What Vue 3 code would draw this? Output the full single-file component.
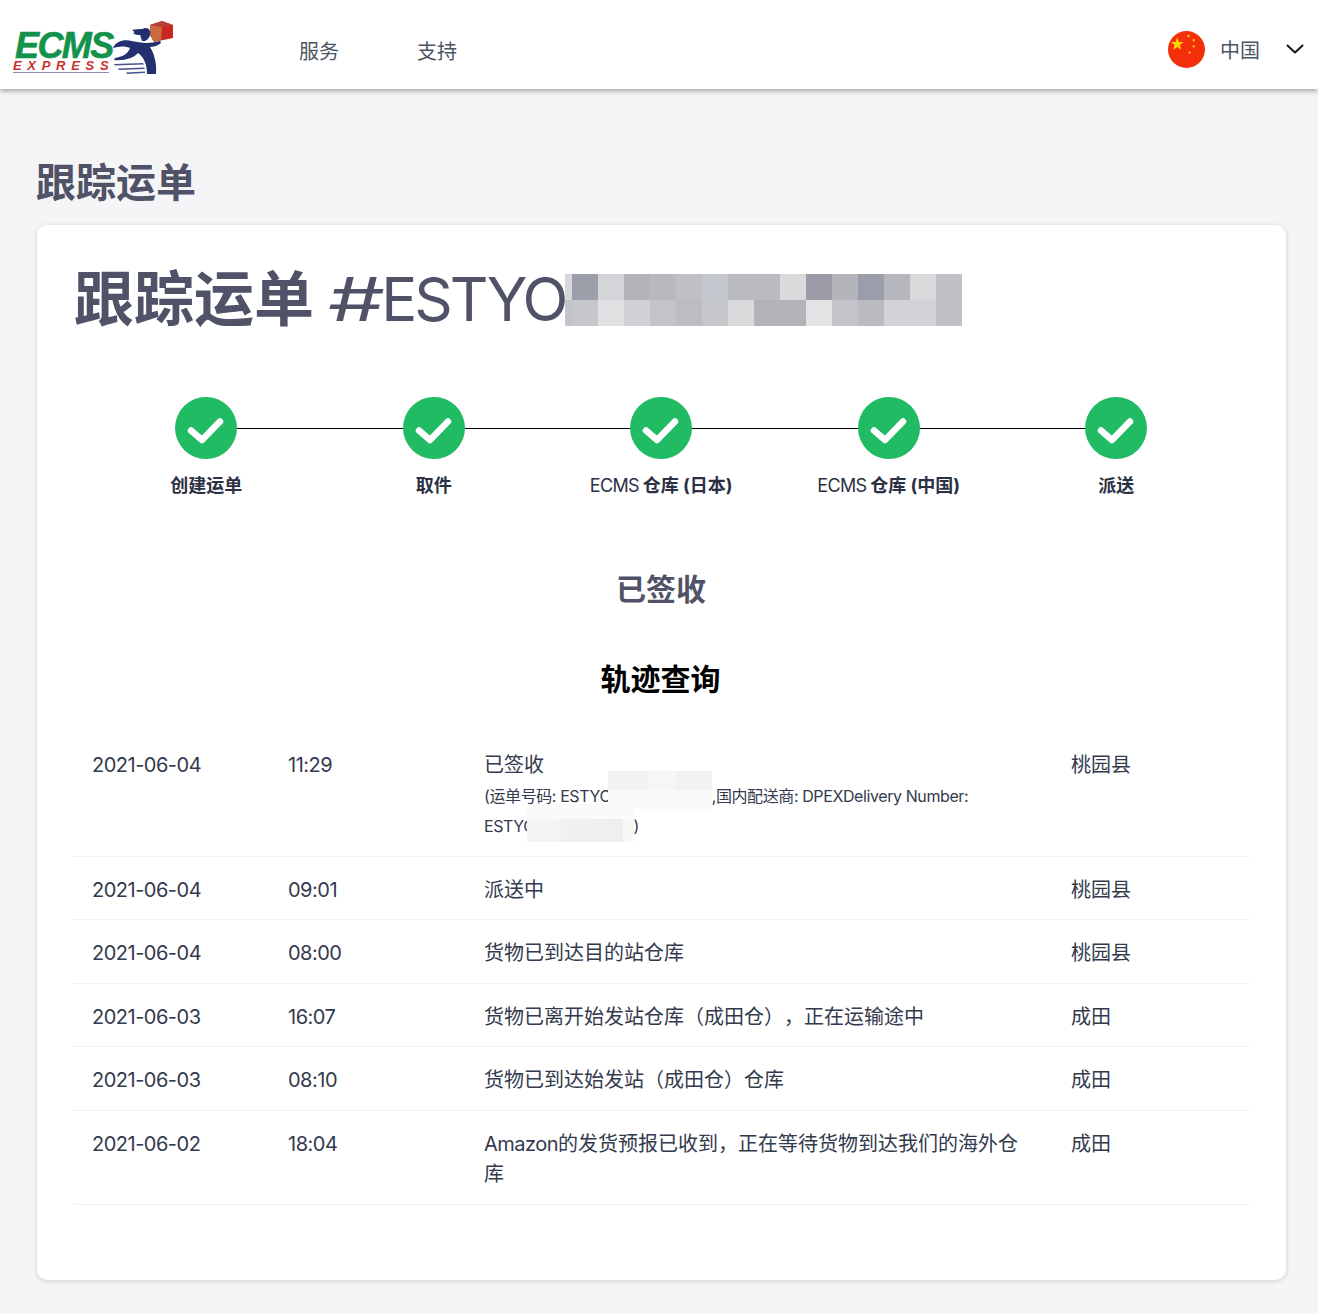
<template>
  <div class="page">
    <!-- 顶部导航 -->
    <header class="topbar">
      <div class="logo">
        <div class="logo-text">
          <span class="logo-ecms">ECMS</span>
          <span class="logo-express">EXPRESS</span>
        </div>
        <svg class="logo-runner" viewBox="112 18 64 60" width="64" height="60">
          <path d="M150 25 L162 21 L173 25 L173 38 L154 42 L150 35 Z" fill="#c8281f" />
          <path d="M150 25 L162 27 L161 40 L154 42 L150 35 Z" fill="#c96a3f" />
          <path d="M150 25 L162 21 L173 25 L162 27 Z" fill="#b8403a" />
          <path d="M140 32 C142 27 149 27 150 31 C151 35 149 39 145 41 L142 41 C141 38 140 35 140 32 Z" fill="#232f6e" />
          <path d="M141 35 C138 35 135 35 133 33 C135 33 135 32 132 30 C135 29 139 29 143 29 Z" fill="#232f6e" />
          <path d="M113 48 C116 41 124 39 132 41 C140 43 150 44 160 41 L161 43 C157 46 153 47 150 47 C154 53 157 63 156 74 L147 74 C147 65 144 57 138 53 C134 58 124 61 114 60 L115 58 C122 57 128 54 130 48 C125 46 119 46 113 48 Z" fill="#232f6e" />
          <path d="M114 64 L143 63 L144 64.5 L115 65.5 Z M118 68.5 L144 67.5 L145 69 L119 70 Z M126 72.5 L145 71.5 L145 73 L127 74 Z" fill="#4a5590" />
        </svg>
      </div>
      <nav class="nav">
        <a class="nav-item">服务</a>
        <a class="nav-item">支持</a>
      </nav>
      <div class="lang">
        <svg class="flag" viewBox="0 0 36 36" width="37" height="37">
          <circle cx="18" cy="18" r="18" fill="#f42f0c" />
          <polygon points="9,6 10.6,10.6 15.5,10.7 11.6,13.7 13,18.3 9,15.6 5,18.3 6.4,13.7 2.5,10.7 7.4,10.6" fill="#ffd500" />
          <circle cx="20" cy="5" r="1.1" fill="#ffd500" />
          <circle cx="25" cy="9" r="1.1" fill="#ffd500" />
          <circle cx="25" cy="15" r="1.1" fill="#ffd500" />
          <circle cx="21" cy="21" r="1.1" fill="#ffd500" />
        </svg>
        <span class="lang-name">中国</span>
        <svg class="chevron" viewBox="0 0 18 10" width="18" height="10">
          <path d="M1.5 1.5 L9 8.5 L16.5 1.5" fill="none" stroke="#111827" stroke-width="2" stroke-linecap="round" stroke-linejoin="round" />
        </svg>
      </div>
    </header>

    <main class="content">
      <h1 class="page-title">跟踪运单</h1>

      <section class="card">
        <div class="order-head">
          <h2 class="order-title">跟踪运单 <span class="order-hash">#</span><span class="order-no">ESTYO</span></h2>
          <div class="mosaic">
            <i v-for="(c, i) in mosaicCells" :key="i" :style="{ background: c }"></i>
          </div>
        </div>

        <!-- 进度 -->
        <ol class="steps">
          <li v-for="(step, i) in steps" :key="i" class="step">
            <span class="step-dot">
              <svg viewBox="0 0 62 62" width="62" height="62">
                <path d="M16 33.5 L27 43 L45 24.5" fill="none" stroke="#fff" stroke-width="6.5" stroke-linecap="round" stroke-linejoin="round" />
              </svg>
            </span>
            <span class="step-label"><span v-if="step.brand" class="step-brand">{{ step.brand }}</span>{{ step.name }}</span>
          </li>
        </ol>

        <p class="status">已签收</p>
        <h3 class="track-title">轨迹查询</h3>

        <div class="track-table">
          <div v-for="(row, i) in rows" :key="i" class="track-row">
            <div class="num">{{ row.date }}</div>
            <div class="num">{{ row.time }}</div>
            <div class="track-text">
              <span v-if="row.lead" class="num">{{ row.lead }}</span>{{ row.text }}
              <div v-if="row.first" class="track-note">
                (运单号码: ESTYC<span class="blur blur-a"></span>,国内配送商: DPEXDelivery Number: ESTYC<span class="blur blur-b"></span>)
              </div>
            </div>
            <div>{{ row.place }}</div>
          </div>
        </div>
      </section>
    </main>
  </div>
</template>

<script setup>
const top = ["#d6d7da", "#9c9ea9", "#d4d5d8", "#b3b4b9", "#b8b9be", "#bfc0c5", "#c3c6cc", "#bbbcc1", "#bbbcc1", "#dadbdd", "#9a9ba7", "#b4b5ba", "#9c9dab", "#b6b7bc", "#d8d9db", "#c0c1c6"];
const bottom = ["#c3c4c9", "#c6c7ca", "#dfe0e2", "#d0d1d4", "#c3c4ca", "#bcbdc2", "#c6c7cb", "#d8d9db", "#b2b3b7", "#b2b3b7", "#e2e3e5", "#c3c4ca", "#babbc0", "#d2d3d7", "#d2d3d7", "#bfc0c4"];
const mosaicCells = [...top, ...bottom];

const steps = [
  { name: "创建运单" },
  { name: "取件" },
  { brand: "ECMS", name: "仓库 (日本)" },
  { brand: "ECMS", name: "仓库 (中国)" },
  { name: "派送" },
];

const rows = [
  { date: "2021-06-04", time: "11:29", text: "已签收", place: "桃园县", first: true },
  { date: "2021-06-04", time: "09:01", text: "派送中", place: "桃园县" },
  { date: "2021-06-04", time: "08:00", text: "货物已到达目的站仓库", place: "桃园县" },
  { date: "2021-06-03", time: "16:07", text: "货物已离开始发站仓库（成田仓），正在运输途中", place: "成田" },
  { date: "2021-06-03", time: "08:10", text: "货物已到达始发站（成田仓）仓库", place: "成田" },
  { date: "2021-06-02", time: "18:04", lead: "Amazon", text: "的发货预报已收到，正在等待货物到达我们的海外仓库", place: "成田" },
];
</script>

<style>
body {
  background: #f5f5f7;
}
</style>

<style scoped>
.page {
  min-height: 1314px;
  background: #f5f5f7;
  font-family: Inter, "Noto Sans CJK SC", sans-serif;
  color: #333a4d;
  text-spacing-trim: space-all;
}

/* ── 顶部导航 ── */
.topbar {
  height: 89px;
  background: #fff;
  display: flex;
  align-items: center;
  box-shadow: 0 2px 5px rgba(0, 0, 0, 0.35);
  padding: 0 14px 0 13px;
}

.logo {
  width: 286px;
  align-self: flex-start;
  display: flex;
  margin-top: 18px;
}

.logo-text {
  display: flex;
  flex-direction: column;
  width: 99px;
  margin-top: 14px;
}

.logo-ecms {
  font-family: "Liberation Sans", sans-serif;
  font-size: 36px;
  line-height: 28px;
  font-weight: 700;
  font-style: italic;
  color: #12924a;
  letter-spacing: -1.6px;
  -webkit-text-stroke: 0.6px #12924a;
  padding-left: 2px;
}

.logo-express {
  font-family: "Liberation Sans", sans-serif;
  font-size: 13px;
  line-height: 12px;
  font-weight: 700;
  font-style: italic;
  color: #c8322c;
  letter-spacing: 5.7px;
  white-space: nowrap;
  border-bottom: 1px solid #8b8fb0;
  width: 96px;
}

.nav {
  display: flex;
  gap: 78px;
  margin-top: 12px;
}

.nav-item {
  font-size: 20px;
  color: #4b5563;
}

.lang {
  margin-left: auto;
  display: flex;
  align-items: center;
  margin-top: 9px;
}

.lang-name {
  font-size: 20px;
  color: #4b5563;
  margin-left: 15px;
  margin-right: 26px;
}

/* ── 主体 ── */
.content {
  padding: 0 32px 0 37px;
}

.page-title {
  margin: 0 0 0 -1px;
  padding-top: 69px;
  font-size: 40px;
  line-height: 50px;
  font-weight: 700;
  color: #505268;
}

.card {
  margin-top: 17px;
  height: 1055px;
  box-sizing: border-box;
  background: #fff;
  border-radius: 10px;
  box-shadow: 0 1px 5px rgba(0, 0, 0, 0.16);
  padding: 0 37px;
}

.order-head {
  position: relative;
  height: 172px;
  overflow: hidden;
}

.order-title {
  margin: 0;
  padding-top: 38px;
  font-size: 60px;
  line-height: 72px;
  font-weight: 700;
  color: #505268;
  white-space: nowrap;
}

.order-hash {
  display: inline-block;
  font-weight: 400;
  transform: scaleX(1.5);
  transform-origin: left;
  margin-right: 15px;
}

.order-no {
  font-weight: 400;
  letter-spacing: -3px;
}

.mosaic {
  position: absolute;
  left: 491px;
  top: 49px;
  width: 397px;
  height: 52px;
  display: grid;
  grid-template-columns: 7px repeat(15, 26px);
  grid-template-rows: 26px 26px;
}

/* ── 进度 ── */
.steps {
  list-style: none;
  margin: 0;
  padding: 0 18.5px;
  display: grid;
  grid-template-columns: repeat(5, 227.5px);
}

.step {
  position: relative;
  display: flex;
  flex-direction: column;
  align-items: center;
}

.step:not(:last-child)::after {
  content: "";
  position: absolute;
  left: 50%;
  top: 31px;
  width: 100%;
  height: 1px;
  background: #000;
}

.step-dot {
  position: relative;
  z-index: 1;
  width: 62px;
  height: 62px;
  border-radius: 50%;
  background: #20bb63;
}

.step-dot svg {
  display: block;
}

.step-label {
  margin-top: 15px;
  font-size: 18px;
  line-height: 24px;
  font-weight: 700;
  color: #2b3043;
  white-space: nowrap;
}

.step-brand {
  font-weight: 400;
  letter-spacing: -0.7px;
  margin-right: 4px;
}

.status {
  margin: 71px 1px 0 0;
  text-align: center;
  font-size: 30px;
  line-height: 40px;
  font-weight: 700;
  color: #505268;
}

.track-title {
  margin: 50px 2px 0 0;
  text-align: center;
  font-size: 30px;
  line-height: 40px;
  font-weight: 700;
  color: #000;
}

/* ── 轨迹 ── */
.track-table {
  margin-top: 33px;
}

.track-row {
  display: grid;
  grid-template-columns: 196px 196px 587px 1fr;
  padding: 18px 18px 14px;
  border-bottom: 1px solid #f0f1f3;
  font-size: 20px;
  line-height: 30.5px;
}

.num {
  letter-spacing: -0.5px;
}

.track-text {
  padding-right: 50px;
}

.track-note {
  margin-bottom: 1px;
  font-size: 16px;
  line-height: 30px;
  letter-spacing: -0.4px;
}

/* 打码区域，盖在文字之上 */
.blur {
  display: inline-block;
  position: relative;
  height: 1px;
}

.blur::before {
  content: "";
  position: absolute;
  left: 0;
  width: 100%;
  height: 38px;
}

.blur-a {
  width: 104px;
  margin-left: -3px;
}

.blur-a::before {
  bottom: -7px;
  background:
    linear-gradient(#0000 50%, #f9f9f9 50%),
    linear-gradient(90deg, #f1f1f2 38%, #f6f6f7 38%, #f6f6f7 65%, #f1f1f2 65%);
}

.blur-b {
  width: 107px;
  margin-left: -8px;
}

.blur-b::before {
  bottom: -10px;
  background:
    linear-gradient(#fafafa 40%, #0000 40%),
    linear-gradient(90deg, #f4f4f5 30%, #f1f1f2 30%, #eeeeef 90%, #f7f7f8 90%);
}
</style>
